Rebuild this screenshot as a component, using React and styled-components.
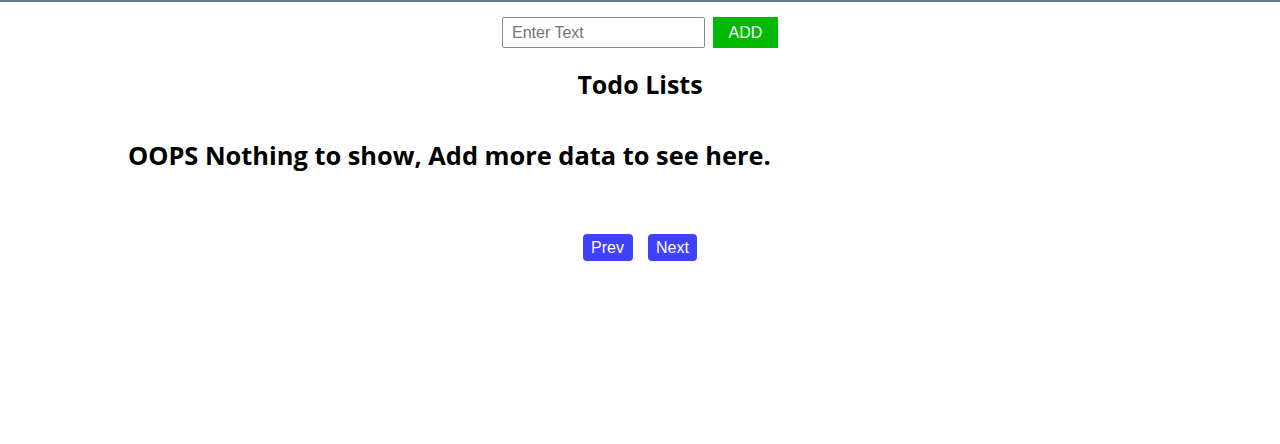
import React, { useState } from 'react';
import styled, { createGlobalStyle } from 'styled-components';

const GlobalStyle = createGlobalStyle`
  html, body {
    margin: 0;
    padding: 0;
    background: #fff;
  }
  body {
    border-top: 2px solid #6b7a8b;
    font-family: "Liberation Sans", Arial, sans-serif;
  }
`;

// 입력 줄
const InputRow = styled.div`
  display: flex;
  justify-content: center;
  gap: 8px;
  padding-top: 15px;
`;

const TextInput = styled.input`
  width: 203px;
  height: 31px;
  box-sizing: border-box;
  border: 1px solid #8a8a8a;
  border-radius: 2px;
  padding: 0 9px;
  font-family: "Liberation Sans", Arial, sans-serif;
  font-size: 16px;
  color: #222;
  outline: none;
  &::placeholder {
    color: #757575;
  }
`;

const AddButton = styled.button`
  width: 65px;
  height: 31px;
  border: none;
  background-color: #00b900;
  color: #fff;
  font-family: "Liberation Sans", Arial, sans-serif;
  font-size: 16px;
  cursor: pointer;
`;

const Title = styled.h1`
  margin: 20px 0 0;
  text-align: center;
  font-family: "Open Sans", sans-serif;
  font-weight: 700;
  font-size: 25px;
  line-height: 32px;
  color: #000;
`;

const Empty = styled.h2`
  margin: 39px 0 0 128px;
  font-family: "Open Sans", sans-serif;
  font-weight: 700;
  font-size: 25.4px;
  line-height: 32px;
  color: #000;
`;

const Pager = styled.div`
  display: flex;
  justify-content: center;
  gap: 15px;
  margin-top: 63px;
`;

const PageButton = styled.button`
  height: 27px;
  padding: 0 8.5px;
  border: none;
  border-radius: 4px;
  background-color: #4040ff;
  color: #fff;
  font-family: "Liberation Sans", Arial, sans-serif;
  font-size: 16px;
  cursor: pointer;
`;

function App() {
  const [text, setText] = useState('');

  return (
    <>
      <GlobalStyle />
      <InputRow>
        <TextInput
          placeholder="Enter Text"
          value={text}
          onChange={(e) => setText(e.target.value)}
        />
        <AddButton>ADD</AddButton>
      </InputRow>
      <Title>Todo Lists</Title>
      <Empty>OOPS Nothing to show, Add more data to see here.</Empty>
      <Pager>
        <PageButton>Prev</PageButton>
        <PageButton>Next</PageButton>
      </Pager>
    </>
  );
}

export default App;
